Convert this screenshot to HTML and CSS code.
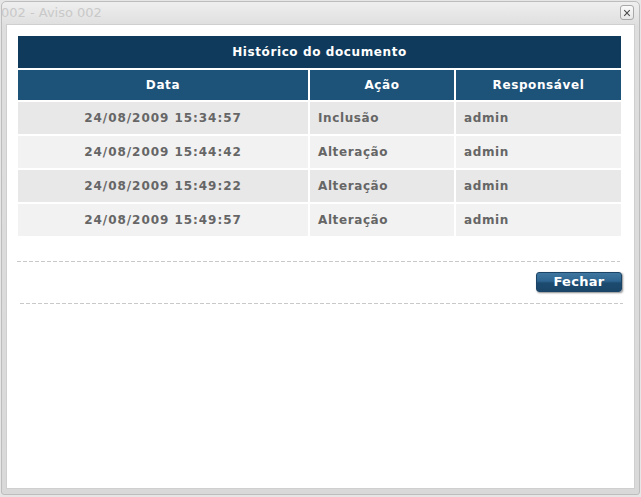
FILE: index.html
```html
<!DOCTYPE html>
<html lang="pt">
<head>
<meta charset="utf-8">
<title>Histórico do documento</title>
<link rel="stylesheet" href="styles.css">
</head>
<body>
<div class="window">
  <div class="titlebar">
    <span class="ghost">002 - Aviso 002</span>
    <span class="close">
      <svg width="13" height="14" viewBox="0 0 13 14"><path d="M3.5 4 L9.5 10 M9.5 4 L3.5 10" stroke="#4a4a4a" stroke-width="1.2" fill="none"/></svg>
    </span>
  </div>
  <div class="content">
    <div class="grid">
      <div class="caption">Histórico do documento</div>
      <div class="th">Data</div>
      <div class="th">Ação</div>
      <div class="th">Responsável</div>

      <div class="td odd center">24/08/2009 15:34:57</div>
      <div class="td odd">Inclusão</div>
      <div class="td odd">admin</div>

      <div class="td even center">24/08/2009 15:44:42</div>
      <div class="td even">Alteração</div>
      <div class="td even">admin</div>

      <div class="td odd center">24/08/2009 15:49:22</div>
      <div class="td odd">Alteração</div>
      <div class="td odd">admin</div>

      <div class="td even center">24/08/2009 15:49:57</div>
      <div class="td even">Alteração</div>
      <div class="td even">admin</div>
    </div>
    <div class="sep sep-top"></div>
    <div class="actions">
      <button class="btn" type="button">Fechar</button>
    </div>
    <div class="sep sep-bottom"></div>
  </div>
</div>
</body>
</html>
```
FILE: styles.css
```css
html, body {
  margin: 0;
  padding: 0;
}
body {
  background: #e6e6e6;
  font-family: "DejaVu Sans", Verdana, sans-serif;
  width: 641px;
  height: 497px;
  overflow: hidden;
}
.window {
  box-sizing: border-box;
  width: 639px;
  height: 494px;
  margin: 1px 0 0 1px;
  border: 1px solid #bdbdbd;
  border-radius: 5px 5px 3px 3px;
  background: linear-gradient(to bottom, #efefef 0, #dedede 24px, #d9d9d9 100%);
  padding: 0 4px 5px 4px;
  display: flex;
  flex-direction: column;
}
.titlebar {
  height: 22px;
  display: flex;
  align-items: flex-start;
  justify-content: space-between;
}
.ghost {
  margin-left: -5px;
  margin-top: 2px;
  font-size: 13px;
  line-height: 18px;
  color: #c9c9c9;
  white-space: nowrap;
}
.close {
  box-sizing: border-box;
  margin-top: 3px;
  margin-right: 1px;
  width: 14px;
  height: 15px;
  border: 1px solid #a8a8a8;
  border-radius: 3px;
  background: linear-gradient(to bottom, #fafafa, #e6e6e6);
  display: flex;
  align-items: center;
  justify-content: center;
}
.close svg {
  display: block;
}
.content {
  flex: 1;
  background: #ffffff;
  border: 1px solid #cfcfcf;
  padding: 11px 13px 0 11px;
}
.grid {
  display: grid;
  grid-template-columns: 290px 144px 165px;
  gap: 2px;
  font-size: 12px;
  font-weight: bold;
  letter-spacing: 0.6px;
}
.caption {
  grid-column: 1 / -1;
  height: 32px;
  line-height: 32px;
  background: #0f3a5b;
  color: #ffffff;
  text-align: center;
}
.th {
  height: 30px;
  line-height: 30px;
  background: #1d5279;
  color: #ffffff;
  text-align: center;
}
.td {
  height: 32px;
  line-height: 32px;
  color: #666666;
  padding-left: 8px;
}
.td.center {
  text-align: center;
  padding-left: 0;
  letter-spacing: 0.95px;
}
.odd {
  background: #e8e8e8;
}
.even {
  background: #f2f2f2;
}
.sep {
  height: 1px;
  background: repeating-linear-gradient(to right, #c9c9c9 0, #c9c9c9 4px, transparent 4px, transparent 6px);
}
.sep-top {
  margin: 25px 1px 0 -1px;
}
.actions {
  display: flex;
  justify-content: flex-end;
  margin: 10px -1px 0 0;
}
.btn {
  width: 86px;
  height: 20px;
  padding: 0;
  border: 1px solid #1b4466;
  border-radius: 3px;
  background: linear-gradient(to bottom, #3f77a0 0, #2e6590 45%, #1c4b70 55%, #1a4568 100%);
  box-shadow: 1px 1px 2px #8a8a8a;
  color: #ffffff;
  font-family: "DejaVu Sans", Verdana, sans-serif;
  font-size: 13px;
  font-weight: bold;
  letter-spacing: 0.3px;
  line-height: 18px;
}
.sep-bottom {
  margin: 11px -2px 0 2px;
}
```
